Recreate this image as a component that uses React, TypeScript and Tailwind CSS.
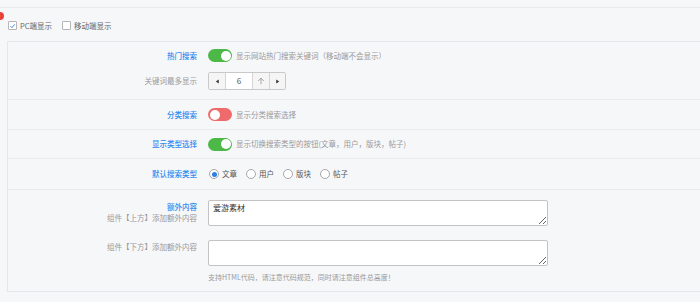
import React from 'react';

const font = "font-['Noto_Sans_CJK_SC','Noto_Sans',sans-serif]";

function Toggle({ on, color }: { on: boolean; color: string }) {
  return (
    <span
      className={`relative inline-flex h-[13px] w-[24px] shrink-0 items-center rounded-full ${color}`}
    >
      <span
        className={`absolute top-[1.5px] h-[10px] w-[10px] rounded-full bg-white ${on ? 'right-[1.5px]' : 'left-[1.5px]'}`}
      />
    </span>
  );
}

function Row({ label, children, className = '' }: { label: React.ReactNode; children: React.ReactNode; className?: string }) {
  return (
    <div className={`flex items-center ${className}`}>
      <div className="w-[189px] shrink-0 text-right">{label}</div>
      <div className="ml-[11px] flex items-center gap-[4px]">{children}</div>
    </div>
  );
}

const radios = [
  { label: '文章', checked: true },
  { label: '用户', checked: false },
  { label: '版块', checked: false },
  { label: '帖子', checked: false },
];

export default function App() {
  return (
    <div className={`relative h-[302px] w-[700px] overflow-hidden bg-[#f6f7f9] ${font} text-[7.5px] text-[#999]`}>
      {/* red marker */}
      <span className="absolute left-[-4px] top-[12px] h-[8px] w-[8px] rounded-full bg-[#e8413a]" />

      <div className="h-[8px] border-b border-[#e9eaec]" />

      {/* platform checkboxes */}
      <div className="flex h-[33px] items-center pl-[8px] pt-[2px] text-[#666]">
        <span className="flex h-[9px] w-[9px] items-center justify-center rounded-[1px] border border-[#b5b5b5] bg-white">
          <svg viewBox="0 0 10 10" className="h-[8px] w-[8px]">
            <path d="M2 5.2 L4.2 7.4 L8.2 2.6" fill="none" stroke="#2d7fe0" strokeWidth="1.3" />
          </svg>
        </span>
        <span className="ml-[3px]">PC端显示</span>
        <span className="ml-[10px] h-[9px] w-[9px] rounded-[1px] border border-[#b5b5b5] bg-white" />
        <span className="ml-[3px]">移动端显示</span>
      </div>

      {/* settings panel */}
      <div className="ml-[7px] border-y border-l border-[#e6e7ea]">
        {/* hot search */}
        <div className="border-b border-[#e9eaec] pb-[9px] pt-[7px]">
          <Row label={<span className="font-medium text-[#2f8cf0]">热门搜索</span>}>
            <Toggle on color="bg-[#4cb847]" />
            <span>显示网站热门搜索关键词（移动端不会显示）</span>
          </Row>
          <Row label={<span>关键词最多显示</span>} className="mt-[10px]">
            <div className="flex h-[18px] w-[78px] items-stretch rounded-[2px] border border-[#c9c9c9] bg-white text-[#555]">
              <span className="flex w-[17px] items-center justify-center border-r border-[#d5d5d5] bg-[#f5f5f5]">
                <svg viewBox="0 0 6 6" className="h-[5px] w-[5px]"><path d="M4.5 0.5 L1 3 L4.5 5.5 Z" fill="#333" /></svg>
              </span>
              <span className="flex flex-1 items-center justify-center text-[8px]">6</span>
              <span className="flex w-[17px] items-center justify-center border-l border-[#d5d5d5] bg-[#f5f5f5]">
                <svg viewBox="0 0 10 10" className="h-[8px] w-[8px]"><path d="M1.5 5 L5 1.5 L8.5 5 M5 1.5 V9" fill="none" stroke="#777" strokeWidth="0.8" /></svg>
              </span>
              <span className="flex w-[16px] items-center justify-center border-l border-[#d5d5d5] bg-[#f5f5f5]">
                <svg viewBox="0 0 6 6" className="h-[5px] w-[5px]"><path d="M1.5 0.5 L5 3 L1.5 5.5 Z" fill="#333" /></svg>
              </span>
            </div>
          </Row>
        </div>

        {/* category search */}
        <div className="flex h-[30px] items-center border-b border-[#e9eaec]">
          <Row label={<span className="font-medium text-[#2f8cf0]">分类搜索</span>}>
            <Toggle on={false} color="bg-[#ef6b6b]" />
            <span>显示分类搜索选择</span>
          </Row>
        </div>

        {/* type select */}
        <div className="flex h-[29px] items-center border-b border-[#e9eaec]">
          <Row label={<span className="font-medium text-[#2f8cf0]">显示类型选择</span>}>
            <Toggle on color="bg-[#4cb847]" />
            <span>显示切换搜索类型的按钮(文章，用户，版块，帖子)</span>
          </Row>
        </div>

        {/* default type */}
        <div className="flex h-[31px] items-center border-b border-[#e9eaec]">
          <Row label={<span className="font-medium text-[#2f8cf0]">默认搜索类型</span>}>
            <div className="flex items-center text-[#555]">
              {radios.map((r, i) => (
                <label key={r.label} className={`flex items-center ${i > 0 ? 'ml-[9px]' : 'ml-[1px]'}`}>
                  <span className="flex h-[10px] w-[10px] items-center justify-center rounded-full border border-[#a8a8a8] bg-white">
                    {r.checked && <span className="h-[5px] w-[5px] rounded-full bg-[#2d7fe0]" />}
                  </span>
                  <span className="ml-[3px]">{r.label}</span>
                </label>
              ))}
            </div>
          </Row>
        </div>

        {/* extra content */}
        <div className="pb-[8px] pt-[10px]">
          <div className="flex items-start">
            <div className="flex w-[189px] shrink-0 flex-col items-end pt-[1px] leading-[11px]">
              <span className="font-medium text-[#2f8cf0]">额外内容</span>
              <span>组件【上方】添加额外内容</span>
            </div>
            <textarea
              readOnly
              defaultValue="爱游素材"
              className="ml-[11px] h-[26px] w-[340px] rounded-[2px] border border-[#c3c3c3] bg-white px-[4px] py-[1px] text-[8px] leading-[11px] text-[#333] outline-none"
            />
          </div>
          <div className="mt-[14px] flex items-start">
            <div className="w-[189px] shrink-0 pt-[1px] text-right leading-[11px]">组件【下方】添加额外内容</div>
            <textarea
              readOnly
              className="ml-[11px] h-[26px] w-[340px] rounded-[2px] border border-[#c3c3c3] bg-white px-[4px] py-[1px] text-[8px] outline-none"
            />
          </div>
          <div className="ml-[200px] mt-[6px] text-[7px]">支持HTML代码，请注意代码规范，同时请注意组件总高度！</div>
        </div>
      </div>
    </div>
  );
}
